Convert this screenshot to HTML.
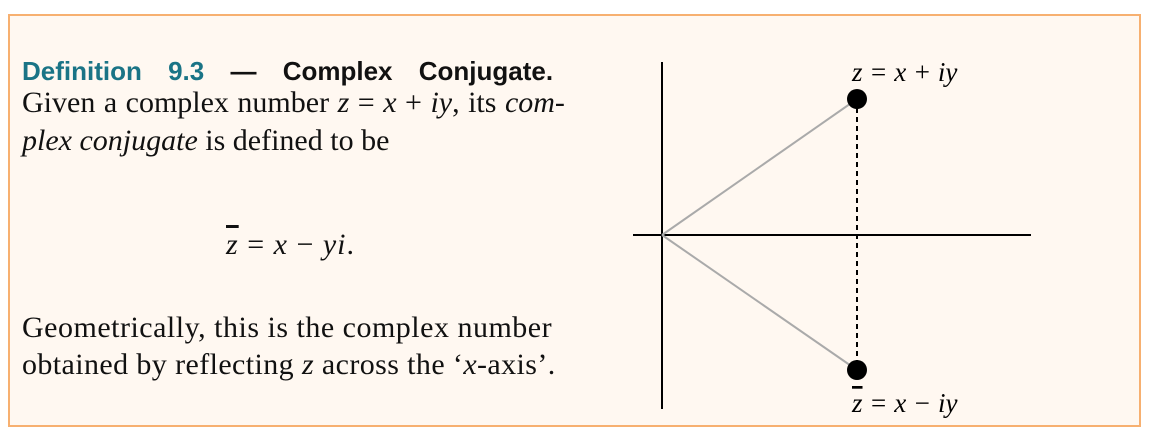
<!DOCTYPE html>
<html><head><style>
body{margin:0;width:1156px;height:438px;background:#fff;position:relative;overflow:hidden}
.box{position:absolute;left:8px;top:14px;width:1133px;height:413px;background:#fff8f1;border:2px solid #f7b070;box-sizing:border-box}
.t{position:absolute;left:22px;font-family:"Liberation Serif",serif;font-size:30px;color:#111;white-space:nowrap}
.h{font-family:"Liberation Sans",sans-serif;font-weight:bold;font-size:26px}
i{font-style:italic}
</style></head><body>
<div class="box"></div>
<div class="t h" style="top:56px;word-spacing:19px"><span style="color:#1a7486">Definition 9.3</span> — Complex Conjugate.</div>
<div class="t" style="top:86px;word-spacing:1px">Given a complex number <i>z</i> = <i>x</i> + <i>iy</i>, its <i>com-</i></div>
<div class="t" style="top:124px"><i>plex conjugate</i> is defined to be</div>
<div class="t" style="top:228px;left:226px;letter-spacing:1px"><i style="text-decoration:overline">z</i> = <i>x</i> − <i>yi</i>.</div>
<div class="t" style="top:311px;letter-spacing:0.5px">Geometrically, this is the complex number</div>
<div class="t" style="top:348px;letter-spacing:0.4px">obtained by reflecting <i>z</i> across the ‘<i>x</i>-axis’.</div>
<svg style="position:absolute;left:0;top:0" width="1156" height="438">
<line x1="662" y1="62" x2="662" y2="409" stroke="#000" stroke-width="2"/>
<line x1="633" y1="235" x2="1031" y2="235" stroke="#000" stroke-width="2"/>
<line x1="662" y1="235" x2="857" y2="99" stroke="#aaa" stroke-width="2"/>
<line x1="662" y1="235" x2="857" y2="370" stroke="#aaa" stroke-width="2"/>
<line x1="857" y1="99" x2="857" y2="370" stroke="#000" stroke-width="2" stroke-dasharray="5,4"/>
<circle cx="857" cy="99" r="10"/>
<circle cx="857" cy="370" r="10"/>
<text x="852" y="81" font-family="Liberation Serif,serif" font-size="27" font-style="italic">z = x + iy</text>
<text x="852" y="412" font-family="Liberation Serif,serif" font-size="27" font-style="italic"><tspan text-decoration="overline">z</tspan> = x − iy</text>
</svg>
</body></html>
